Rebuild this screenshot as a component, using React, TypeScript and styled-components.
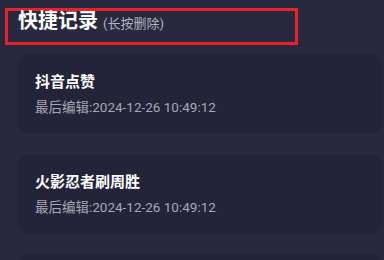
import React from "react";
import styled, { createGlobalStyle } from "styled-components";

const GlobalStyle = createGlobalStyle`
  html, body {
    margin: 0;
    padding: 0;
    background: #28283f;
    font-family: Roboto, "Noto Sans CJK SC", sans-serif;
  }
`;

const Page = styled.div`
  width: 384px;
  height: 260px;
  overflow: hidden;
  background: #28283f;
  padding-top: 8px;
  box-sizing: border-box;
`;

const Header = styled.div`
  display: flex;
  align-items: baseline;
  box-sizing: border-box;
  width: 293px;
  height: 37px;
  margin-left: 5px;
  padding-left: 10px;
  border: 3px solid #e8212b;
`;

const Title = styled.span`
  color: #ffffff;
  font-size: 20px;
  font-weight: 700;
  line-height: 21px;
`;

const Hint = styled.span`
  color: #b4b4c0;
  font-size: 13px;
  margin-left: 5px;
`;

const List = styled.div`
  display: flex;
  flex-direction: column;
  gap: 22px;
  margin: 10px 1px 0 17px;
`;

const Card = styled.div`
  background: #23233a;
  border-radius: 11px;
  padding: 17px 18px;
  display: flex;
  flex-direction: column;
  gap: 6px;
`;

const CardTitle = styled.div`
  color: #ffffff;
  font-size: 15px;
  font-weight: 700;
  line-height: 20px;
`;

const CardMeta = styled.div`
  color: #a8a8b4;
  font-size: 13.5px;
  line-height: 18px;
`;

const records = [
  { name: "抖音点赞", time: "2024-12-26 10:49:12" },
  { name: "火影忍者刷周胜", time: "2024-12-26 10:49:12" },
  { name: "", time: "" },
];

export default function App() {
  return (
    <>
      <GlobalStyle />
      <Page>
        <Header>
          <Title>快捷记录</Title>
          <Hint>(长按删除)</Hint>
        </Header>
        <List>
          {records.map((r, i) => (
            <Card key={i}>
              <CardTitle>{r.name}</CardTitle>
              <CardMeta>{r.time && `最后编辑:${r.time}`}</CardMeta>
            </Card>
          ))}
        </List>
      </Page>
    </>
  );
}
